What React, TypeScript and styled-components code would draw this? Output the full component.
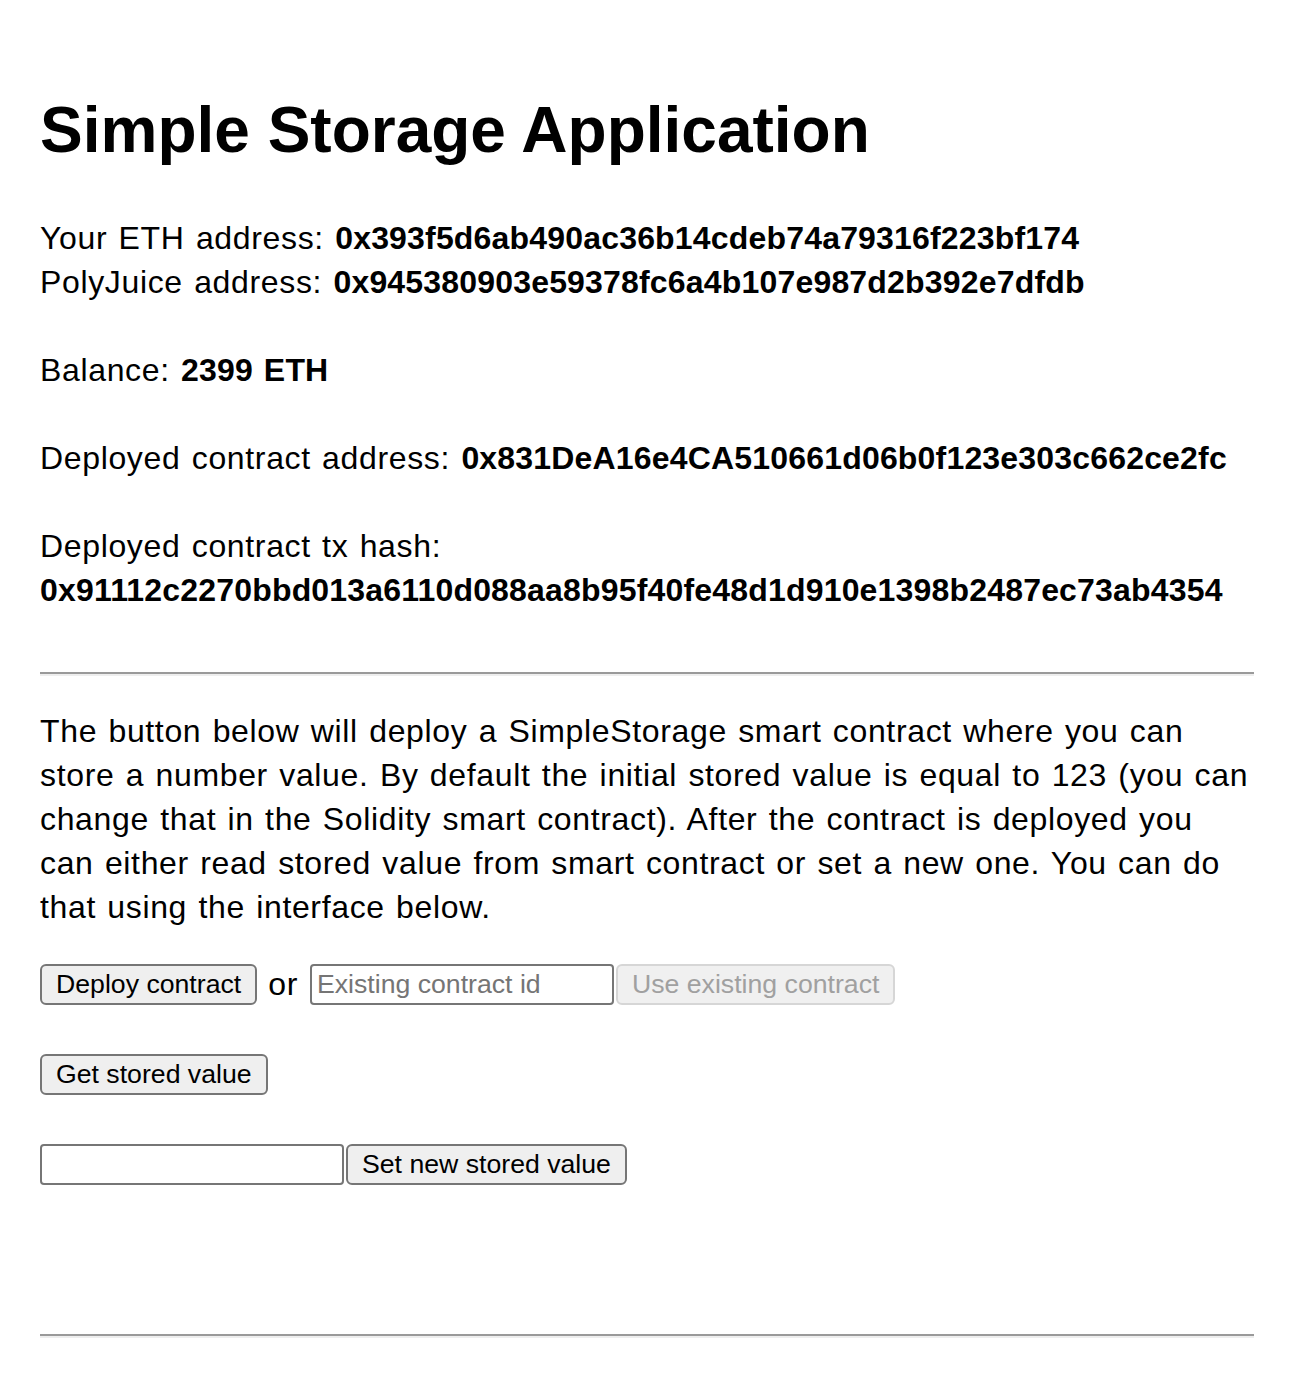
import React from "react";
import styled, { createGlobalStyle } from "styled-components";

const GlobalStyle = createGlobalStyle`
  body {
    margin: 0;
    background: #ffffff;
    color: #000000;
    font-family: "Liberation Sans", Arial, sans-serif;
  }
`;

const Page = styled.div`
  padding: 92px 42px 40px 40px;
  font-size: 32px;
  line-height: 44px;
  letter-spacing: 0.65px;
  word-spacing: 1.8px;
`;

const Title = styled.h1`
  margin: 0 0 48px;
  font-size: 64px;
  line-height: 76px;
  font-weight: 700;
  letter-spacing: 0;
  word-spacing: 0;
`;

const InfoGroup = styled.div`
  margin-bottom: 44px;
  &:last-of-type {
    margin-bottom: 0;
  }
`;

const Value = styled.b`
  font-weight: 700;
  letter-spacing: 0.18px;
`;

const Divider = styled.hr<{ $top: number }>`
  margin: ${(p) => p.$top}px 0 0;
  height: 0;
  border: none;
  border-top: 2px solid #9a9a9a;
  border-bottom: 2px solid #eeeeee;
`;

const Intro = styled.p`
  margin: 33px 0 35px;
`;

const Row = styled.div`
  display: flex;
  align-items: center;
  height: 41px;
  & + & {
    margin-top: 49px;
  }
`;

const Or = styled.span`
  margin: 0 12px 0 11px;
  line-height: 41px;
`;

const Button = styled.button`
  height: 41px;
  padding: 0 14px;
  font-family: "Liberation Sans", Arial, sans-serif;
  font-size: 26.67px;
  color: #000000;
  background: #efefef;
  border: 2px solid #767676;
  border-radius: 6px;
  &:disabled {
    color: #a0a0a0;
    background: #f0f0f0;
    border-color: #d6d6d6;
  }
`;

const Field = styled.input`
  box-sizing: border-box;
  width: 304px;
  height: 41px;
  padding: 2px 5px;
  font-family: "Liberation Sans", Arial, sans-serif;
  font-size: 26.67px;
  border: 2px solid #767676;
  border-radius: 4px;
  margin-right: 2px;
  &::placeholder {
    color: #757575;
  }
`;

export default function App() {
  return (
    <>
      <GlobalStyle />
      <Page>
        <Title>Simple Storage Application</Title>
        <InfoGroup>
          Your ETH address: <Value>0x393f5d6ab490ac36b14cdeb74a79316f223bf174</Value>
          <br />
          PolyJuice address: <Value>0x945380903e59378fc6a4b107e987d2b392e7dfdb</Value>
        </InfoGroup>
        <InfoGroup>
          Balance: <Value>2399 ETH</Value>
        </InfoGroup>
        <InfoGroup>
          Deployed contract address: <Value>0x831DeA16e4CA510661d06b0f123e303c662ce2fc</Value>
        </InfoGroup>
        <InfoGroup>
          Deployed contract tx hash:
          <br />
          <Value>0x91112c2270bbd013a6110d088aa8b95f40fe48d1d910e1398b2487ec73ab4354</Value>
        </InfoGroup>
        <Divider $top={60} />
        <Intro>
          The button below will deploy a SimpleStorage smart contract where you can store a
          number value. By default the initial stored value is equal to 123 (you can change
          that in the Solidity smart contract). After the contract is deployed you can either
          read stored value from smart contract or set a new one. You can do that using the
          interface below.
        </Intro>
        <Row>
          <Button>Deploy contract</Button>
          <Or>or</Or>
          <Field placeholder="Existing contract id" />
          <Button disabled>Use existing contract</Button>
        </Row>
        <Row>
          <Button>Get stored value</Button>
        </Row>
        <Row>
          <Field />
          <Button>Set new stored value</Button>
        </Row>
        <Divider $top={149} />
      </Page>
    </>
  );
}
